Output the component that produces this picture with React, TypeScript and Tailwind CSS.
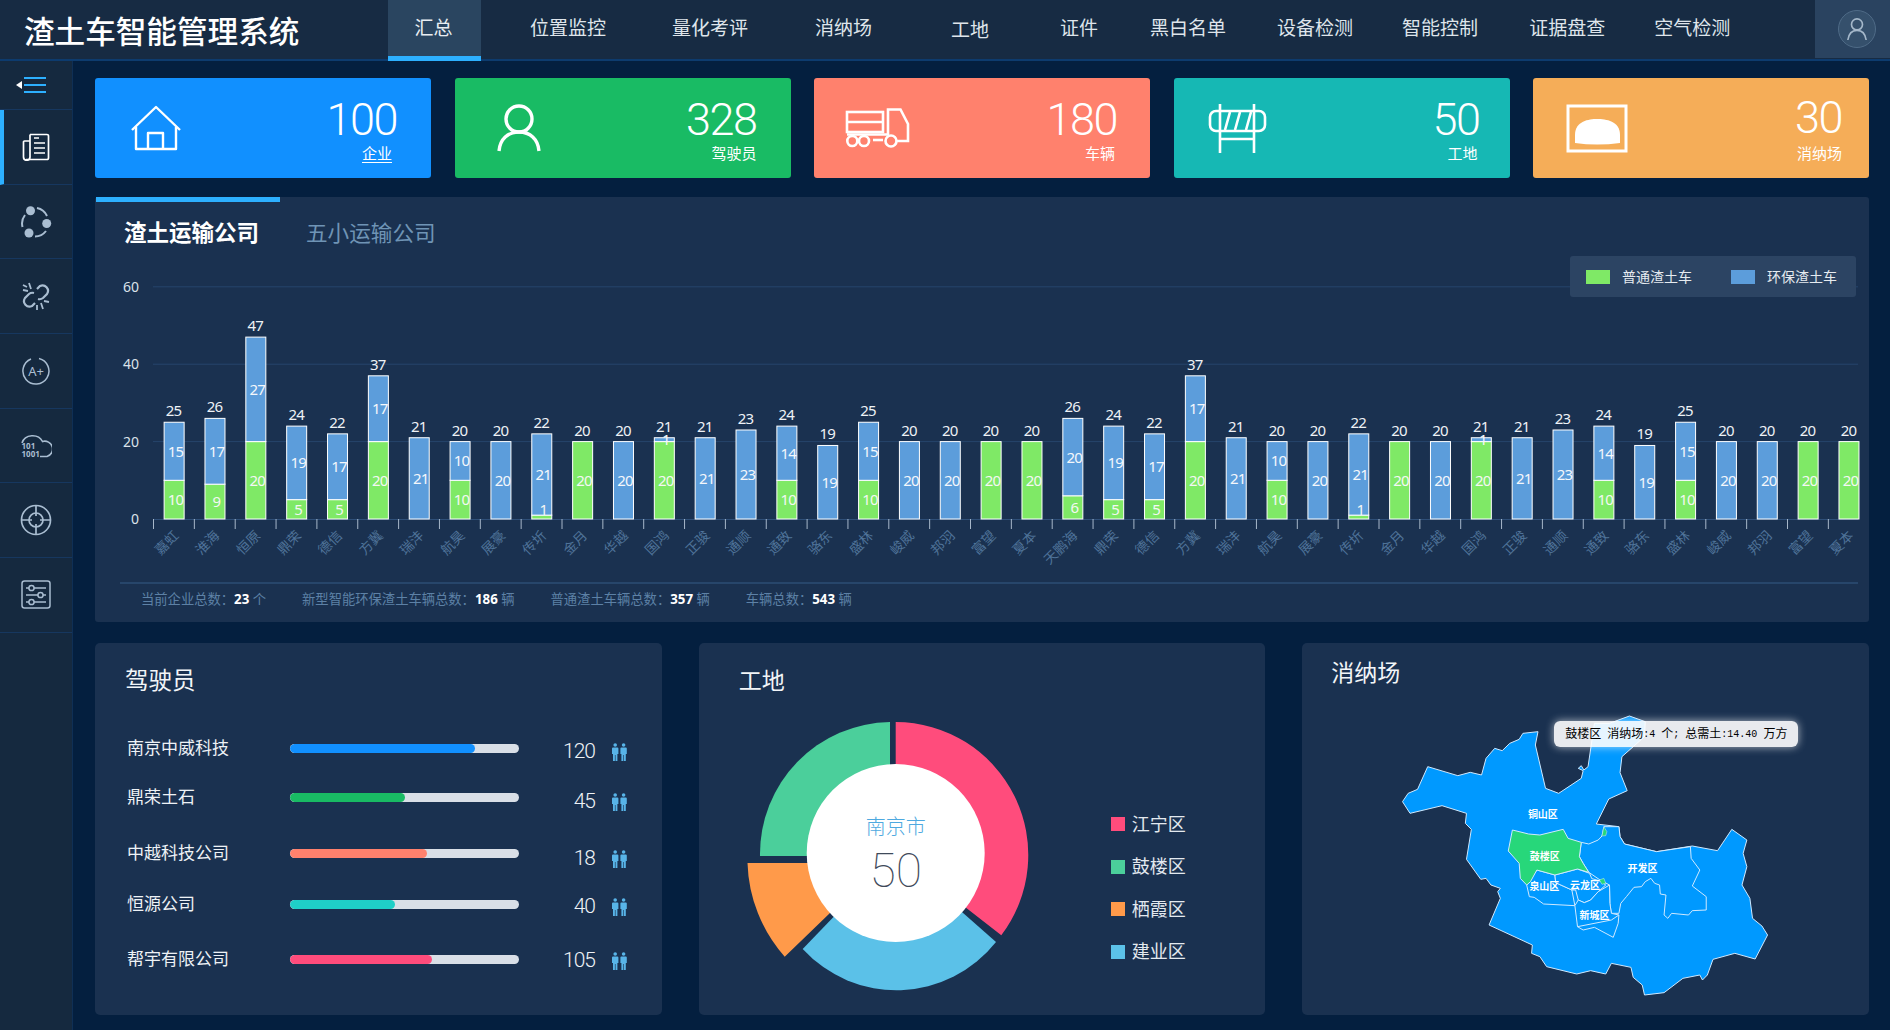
import React from "react";

const navItems = [
  { label: "位置监控", cls: "ml-[49px]" },
  { label: "量化考评", cls: "ml-[66px]" },
  { label: "消纳场", cls: "ml-[67px]" },
  { label: "工地", cls: "ml-[79px] translate-y-[2px]" },
  { label: "证件", cls: "ml-[71px]" },
  { label: "黑白名单", cls: "ml-[52px]" },
  { label: "设备检测", cls: "ml-[51px]" },
  { label: "智能控制", cls: "ml-[49px]" },
  { label: "证据盘查", cls: "ml-[51px]" },
  { label: "空气检测", cls: "ml-[49px]" },
];

const names = [
  "嘉虹", "淮海", "恒原", "鼎荣", "德信", "方冀", "瑞沣", "航昊", "展豪", "传圻", "金月", "华越", "国鸿", "正骏",
  "通顺", "通致", "骆东", "盛林", "峻威", "邦羽", "富望", "夏本", "天鹏海", "鼎荣", "德信", "方冀", "瑞沣", "航昊",
  "展豪", "传圻", "金月", "华越", "国鸿", "正骏", "通顺", "通致", "骆东", "盛林", "峻威", "邦羽", "富望", "夏本",
];
const green = [10, 9, 20, 5, 5, 20, 0, 10, 0, 1, 20, 0, 20, 0, 0, 10, 0, 10, 0, 0, 20, 20, 6, 5, 5, 20, 0, 10, 0, 1, 20, 0, 20, 0, 0, 10, 0, 10, 0, 0, 20, 20];
const blue = [15, 17, 27, 19, 17, 17, 21, 10, 20, 21, 0, 20, 1, 21, 23, 14, 19, 15, 20, 20, 0, 0, 20, 19, 17, 17, 21, 10, 20, 21, 0, 20, 1, 21, 23, 14, 19, 15, 20, 20, 0, 0];

const Y0 = 519;
const UNIT = 3.87;
const STEP = 40.85;

function BarChart() {
  return (
    <svg viewBox="95 257 1774 325" width={1774} height={325} className="block">
      {[20, 40, 60].map((v) => (
        <line key={v} x1={153} x2={1858} y1={Y0 - v * UNIT} y2={Y0 - v * UNIT} stroke="#26456c" strokeWidth={1} />
      ))}
      <line x1={153} x2={1858} y1={Y0 + 0.5} y2={Y0 + 0.5} stroke="#2f4f78" strokeWidth={1} />
      {[0, 20, 40, 60].map((v) => (
        <text key={v} x={139} y={Y0 - v * UNIT + 5} textAnchor="end" fontSize={14} fill="#dbe2ea">
          {v}
        </text>
      ))}
      {names.map((name, i) => {
        const tick = 153 + i * STEP;
        const cx = tick + STEP / 2 + 0.7;
        const g = green[i];
        const b = blue[i];
        const gTop = Y0 - g * UNIT;
        const bTop = gTop - b * UNIT;
        return (
          <g key={i}>
            <line x1={tick + 0.5} x2={tick + 0.5} y1={Y0} y2={Y0 + 10} stroke="#a7b7c9" strokeWidth={1} />
            <text
              x={tick + 23}
              y={538}
              textAnchor="end"
              fontSize={13.5}
              fill="#4f7399"
              transform={`rotate(-45 ${tick + 23} 533)`}
            >
              {name}
            </text>
            {g > 0 && <rect x={cx - 10} y={gTop} width={20} height={g * UNIT} fill="#7fe966" stroke="#fff" strokeWidth={1} />}
            {b > 0 && <rect x={cx - 10} y={bTop} width={20} height={b * UNIT} fill="#5c9ddb" stroke="#fff" strokeWidth={1} />}
            {g > 0 && (
              <text x={cx + 1.5} y={Math.min(Y0 - (g * UNIT) / 2, 509.5) + 5.5} textAnchor="middle" fontSize={15} letterSpacing={-0.8} fill="#f4f7f4">
                {g}
              </text>
            )}
            {b > 0 && (
              <text x={cx + 1.5} y={gTop - (b * UNIT) / 2 + 5.5} textAnchor="middle" fontSize={15} letterSpacing={-0.8} fill="#f4f7fb">
                {b}
              </text>
            )}
            <text x={cx - 0.5} y={bTop - 6} textAnchor="middle" fontSize={15} letterSpacing={-0.8} fill="#eef2f6">
              {g + b}
            </text>
          </g>
        );
      })}
    </svg>
  );
}

function HouseIcon() {
  return (
    <svg viewBox="0 0 50 46" width={50} height={46} fill="none" stroke="#fff" strokeWidth={2.4} strokeLinejoin="round">
      <path d="M1 25 L25 2 L49 25" />
      <path d="M5 22 V44 H45 V22" />
      <path d="M17 44 V28 H32 V44" />
    </svg>
  );
}

function PersonIcon() {
  return (
    <svg viewBox="0 0 44 48" width={44} height={48} fill="none" stroke="#fff" strokeWidth={3.4}>
      <ellipse cx={22} cy={15} rx={13} ry={13} />
      <path d="M2 47 C3 35 11 28 22 28 C33 28 41 35 42 47" />
    </svg>
  );
}

function TruckIcon() {
  return (
    <svg viewBox="845 108 66 42" width={66} height={42} fill="none" stroke="#fff" strokeWidth={2.6}>
      <rect x={847} y={113} width={36} height={20} />
      <path d="M847 123 H883" />
      <path d="M847 135.5 H888 V110.5 H900.5 L908 125 V142 H897" />
      <circle cx={852.3} cy={142} r={5} />
      <circle cx={864} cy={142} r={5} />
      <circle cx={891} cy={142} r={5.5} />
      <path d="M873 141 H883" />
    </svg>
  );
}

function BarrierIcon() {
  return (
    <svg viewBox="1208 103 60 51" width={60} height={51} fill="none" stroke="#fff" strokeWidth={2.6}>
      <rect x={1210} y={111} width={55} height={20} rx={6} />
      <path d="M1220 104 V153 M1254 104 V153 M1220 139 H1254" />
      <path d="M1230 112 L1225 130 M1240 112 L1235 130 M1251 112 L1246 130" />
    </svg>
  );
}

function TunnelIcon() {
  return (
    <svg viewBox="1566 104 62 50" width={62} height={50} fill="none" stroke="#fff" strokeWidth={3}>
      <rect x={1568} y={106} width={58} height={45} />
      <path d="M1575 143 V135 C1575 121 1589 119 1597 119 C1606 119 1620 121 1620 135 V143 Q1597 146 1575 143 Z" fill="#fff" stroke="none" />
    </svg>
  );
}

const cards = [
  { value: "100", label: "企业", bg: "bg-[#1190ff]", icon: <HouseIcon />, iconCls: "ml-[36px]", numCls: "mr-[34px]", labelCls: "mr-[39px] underline underline-offset-[3px] mt-[1px]" },
  { value: "328", label: "驾驶员", bg: "bg-[#19bb64]", icon: <PersonIcon />, iconCls: "ml-[42px]", numCls: "mr-[34px]", labelCls: "mr-[34px] mt-[1px]" },
  { value: "180", label: "车辆", bg: "bg-[#ff816d]", icon: <TruckIcon />, iconCls: "ml-[31px]", numCls: "mr-[33px]", labelCls: "mr-[35px] mt-[1px]" },
  { value: "50", label: "工地", bg: "bg-[#16b8b4]", icon: <BarrierIcon />, iconCls: "ml-[34px]", numCls: "mr-[30px]", labelCls: "mr-[32px] mt-[1px]" },
  { value: "30", label: "消纳场", bg: "bg-[#f5ad58]", icon: <TunnelIcon />, iconCls: "ml-[33px] translate-y-[1px]", numCls: "mr-[27px] -mt-[2px]", labelCls: "mr-[27px] mt-[3px]" },
];

function NavToggle() {
  return (
    <svg viewBox="0 0 32 18" width={32} height={18}>
      <path d="M0 9 L6 5 V13 Z" fill="#fff" />
      <path d="M8 2 H30 M8 9 H30 M8 16 H30" stroke="#2db0ff" strokeWidth={2} />
    </svg>
  );
}

function DocIcon() {
  return (
    <svg viewBox="0 0 28 28" width={28} height={28} fill="none" stroke="#fff" strokeWidth={1.7}>
      <path d="M8 1.5 H25 A1.5 1.5 0 0 1 26.5 3 V25 A1.5 1.5 0 0 1 25 26.5 H4" />
      <path d="M8 1.5 V24 A3.2 3.2 0 0 1 1.5 24 V9 A1 1 0 0 1 2.5 8 H8" />
      <path d="M12 5 H17 M12 10 H23 M12 15 H23 M12 20 H23" />
    </svg>
  );
}

function ShareIcon() {
  return (
    <svg viewBox="0 0 32 32" width={32} height={32} fill="none" stroke="#a9bdd1" strokeWidth={2}>
      <circle cx={10.5} cy={4.8} r={4.5} fill="#a9bdd1" stroke="none" />
      <circle cx={26.7} cy={17.5} r={4.5} fill="#a9bdd1" stroke="none" />
      <circle cx={9} cy={27} r={4.5} fill="#a9bdd1" stroke="none" />
      <path d="M5 9 A14 14 0 0 0 2.5 21" />
      <path d="M17 2 A14 14 0 0 1 27 10" />
      <path d="M15 30.5 A14 14 0 0 0 26 25" />
    </svg>
  );
}

function UnlinkIcon() {
  return (
    <svg viewBox="0 0 28 28" width={28} height={28} fill="none" stroke="#a9bdd1" strokeWidth={2.2}>
      <path d="M15 7 L18 4 A5.5 5.5 0 0 1 25 12 L21 16 A5.5 5.5 0 0 1 16 17" />
      <path d="M13 21 L10 24 A5.5 5.5 0 0 1 3 16 L7 12 A5.5 5.5 0 0 1 12 11" />
      <path d="M7 1 L9 7 M1 8 L6 9 M1 3 L5 5 M21 27 L19 21 M27 20 L22 19 M15 28 V23" strokeWidth={1.8} />
    </svg>
  );
}

function GradeIcon() {
  return (
    <svg viewBox="0 0 28 28" width={28} height={28} fill="none" stroke="#a9bdd1" strokeWidth={1.5}>
      <path d="M17 1.4 A13 13 0 1 1 9 2" />
      <text x={14} y={18.5} textAnchor="middle" fontSize={13} fill="#a9bdd1" stroke="none">
        A+
      </text>
    </svg>
  );
}

function CloudIcon() {
  return (
    <svg viewBox="0 0 31 25" width={31} height={25} fill="none" stroke="#a9bdd1" strokeWidth={1.6}>
      <path d="M1 10 A11 10 0 0 1 21.5 8.5 A7.5 7.5 0 0 1 26 23.5 H19" />
      <text x={0.5} y={16} fontSize={8} fontWeight={700} fill="#a9bdd1" stroke="none">
        101
      </text>
      <text x={0.5} y={24} fontSize={8} fontWeight={700} fill="#a9bdd1" stroke="none">
        1001
      </text>
    </svg>
  );
}

function TargetIcon() {
  return (
    <svg viewBox="0 0 32 32" width={32} height={32} fill="none" stroke="#a9bdd1" strokeWidth={1.7}>
      <circle cx={16} cy={16} r={14.5} />
      <circle cx={16} cy={16} r={7} />
      <path d="M16 1.5 V12 M16 20 V30.5 M1.5 16 H12 M20 16 H30.5" />
    </svg>
  );
}

function SlidersIcon() {
  return (
    <svg viewBox="0 0 30 29" width={30} height={29} fill="none" stroke="#a9bdd1" strokeWidth={1.5}>
      <rect x={1} y={1} width={28} height={27} rx={2.5} />
      <path d="M5 8 H8 M13 8 H25 M5 15 H17 M22 15 H25 M5 22 H8 M13 22 H25" />
      <circle cx={10.5} cy={8} r={2.6} />
      <circle cx={19.5} cy={15} r={2.6} />
      <circle cx={10.5} cy={22} r={2.6} />
    </svg>
  );
}

function PeopleIcon() {
  const fig = (
    <>
      <circle cx={3.2} cy={2} r={1.8} />
      <path d="M1 4.5 H5.4 A1 1 0 0 1 6.4 5.5 V11 H5.4 V18 H3.5 V12 H2.9 V18 H1 V11 H0 V5.5 A1 1 0 0 1 1 4.5 Z" />
    </>
  );
  return (
    <svg viewBox="0 0 15 18" width={15} height={18} fill="#58b4e8">
      {fig}
      <g transform="translate(8.4 0)">{fig}</g>
    </svg>
  );
}

const drivers = [
  { name: "南京中威科技", value: 120, fill: "bg-[#1190ff]", w: "w-[81%]", rowCls: "mt-[37px]", off: "translate-y-[4px]" },
  { name: "鼎荣土石", value: 45, fill: "bg-[#19bb64]", w: "w-[50%]", rowCls: "mt-[19px]", off: "translate-y-[5px]" },
  { name: "中越科技公司", value: 18, fill: "bg-[#ff816d]", w: "w-[60%]", rowCls: "mt-[26px]", off: "translate-y-[6px]" },
  { name: "恒源公司", value: 40, fill: "bg-[#1fcfc7]", w: "w-[46%]", rowCls: "mt-[21px]", off: "translate-y-[3px]" },
  { name: "帮宇有限公司", value: 105, fill: "bg-[#ff4c7c]", w: "w-[62%]", rowCls: "mt-[25px]", off: "translate-y-[2px]" },
];

function Donut() {
  return (
    <svg viewBox="745 715 300 285" width={300} height={285} className="shrink-0">
      <path d="M891 722 A132 132 0 0 0 761 856 L891 856 Z" fill="#4bcf9b" />
      <path d="M748.5 863 L880 863 L880 866 L829.7 914.3 L785.7 956.7 A148 148 0 0 1 748.5 863 Z" fill="#ff9a4a" />
      <path d="M997 942 A127 127 0 0 1 803.7 949 L896 853 Z" fill="#5bc1e8" />
      <path d="M896.7 722 A133 133 0 0 1 1002.3 935.3 L896.7 853 Z" fill="#ff4c7c" />
      <circle cx={896.7} cy={853} r={89} fill="#fff" />
      <text x={896.7} y={834} textAnchor="middle" fontSize={20} fill="#4ea9e0" fontWeight={300}>
        南京市
      </text>
      <text x={896.7} y={887} textAnchor="middle" fontSize={48} fill="#3f4a5a" fontWeight={100} fontFamily="Roboto, sans-serif">
        50
      </text>
    </svg>
  );
}

const siteLegend = [
  { label: "江宁区", color: "bg-[#ff4c7c]" },
  { label: "鼓楼区", color: "bg-[#4bcf9b]" },
  { label: "栖霞区", color: "bg-[#ff9a4a]" },
  { label: "建业区", color: "bg-[#5bc1e8]" },
];

// map outlines are read off the reference, in zoom-crop coordinates
const pts = (list: number[][]) => list.map(([x, y]) => `${x / 2.657 - 100},${y / 3 - 70}`).join(" ");

const outline = [
  [275, 485], [290, 460], [315, 448], [342, 380], [422, 407], [455, 397], [485, 405], [497, 355], [520, 325], [540, 332],
  [560, 310], [585, 298], [595, 280], [635, 275], [628, 315], [655, 445], [690, 460], [750, 415], [755, 392], [742, 385],
  [750, 377], [757, 390], [768, 380], [785, 250], [825, 250], [878, 228], [920, 245], [918, 290], [858, 350], [853, 398],
  [872, 452], [823, 477], [790, 552], [850, 560], [853, 590], [865, 612], [950, 635], [1045, 618], [1112, 632], [1150, 568],
  [1190, 600], [1180, 640], [1190, 680], [1177, 735], [1198, 775], [1205, 835], [1230, 858], [1245, 885], [1212, 957],
  [1158, 940], [1100, 958], [1085, 1005], [1072, 1020], [1065, 1005], [1020, 1015], [970, 1058], [918, 1065], [912, 1035],
  [888, 1012], [882, 982], [830, 970], [815, 1002], [775, 992], [738, 1002], [658, 980], [640, 950], [618, 940], [620, 915],
  [505, 855], [535, 775], [528, 755], [535, 745], [510, 735], [497, 715], [483, 718], [445, 658], [458, 568], [442, 550],
  [445, 520], [380, 497], [295, 520],
];
const gulou = [
  [567, 570], [610, 582], [640, 585], [702, 568], [715, 595], [750, 607], [745, 650], [755, 670], [770, 697], [740, 687],
  [680, 705], [632, 690], [615, 725], [605, 735], [588, 715], [585, 670], [556, 633],
];
const quanshan = [[605, 735], [632, 690], [680, 705], [682, 728], [725, 750], [733, 797], [650, 792], [625, 772], [612, 770]];
const yunlong = [
  [680, 705], [740, 687], [772, 700], [778, 716], [798, 722], [815, 735], [795, 755], [775, 780], [758, 788], [742, 780],
  [735, 750], [725, 750], [682, 728],
];
const xincheng = [
  [742, 780], [758, 788], [775, 780], [795, 755], [825, 735], [826, 790], [830, 820], [850, 825], [848, 850], [835, 892],
  [785, 862], [755, 870], [740, 860], [733, 797],
];
const kaifa = [
  [750, 607], [770, 612], [795, 600], [805, 588], [810, 560], [850, 560], [853, 590], [865, 612], [950, 635], [1040, 620],
  [1042, 655], [1065, 690], [1045, 738], [1082, 770], [1082, 810], [1045, 812], [1035, 825], [990, 820], [980, 835], [970, 825],
  [975, 765], [960, 762], [958, 735], [945, 730], [935, 715], [920, 725], [910, 740], [890, 742], [870, 770], [855, 790],
  [850, 820], [830, 820], [826, 790], [825, 735], [800, 720], [770, 697], [755, 670], [745, 650],
];
const mapLabels: [string, number, number][] = [
  ["铜山区", 648, 523],
  ["鼓楼区", 653, 650],
  ["开发区", 913, 685],
  ["泉山区", 652, 740],
  ["云龙区", 760, 737],
  ["新城区", 785, 827],
];

function CityMap() {
  return (
    <svg viewBox="0 0 400 290" width={400} height={290} className="ml-[97px] mt-[22px] block">
      <g stroke="#cfe9ff" strokeWidth={1} strokeLinejoin="round">
        <polygon points={pts(outline)} fill="#0099ff" />
        <polygon points={pts(kaifa)} fill="#0099ff" />
        <polygon points={pts(quanshan)} fill="#0099ff" />
        <polygon points={pts(yunlong)} fill="#0099ff" />
        <polygon points={pts(xincheng)} fill="#0099ff" />
        <polyline points={pts([[740, 860], [830, 840], [850, 825]])} fill="none" />
        <polygon points={pts(gulou)} fill="#27d77a" />
        <polygon points={pts([[805, 588], [810, 560], [818, 575], [815, 587]])} fill="#27d77a" strokeWidth={0.5} />
        <polygon points={pts([[798, 720], [810, 715], [815, 730], [805, 733]])} fill="#27d77a" strokeWidth={0.5} />
      </g>
      {mapLabels.map(([t, x, y]) => (
        <text key={t} x={x / 2.657 - 100} y={y / 3 - 70 + 3.5} textAnchor="middle" fontSize={10} fontWeight={700} fill="#fff">
          {t}
        </text>
      ))}
    </svg>
  );
}

const stats = [
  { label: "当前企业总数：", value: "23", unit: "个" },
  { label: "新型智能环保渣土车辆总数：", value: "186", unit: "辆" },
  { label: "普通渣土车辆总数：", value: "357", unit: "辆" },
  { label: "车辆总数：", value: "543", unit: "辆" },
];

function Half({ children }: { children: React.ReactNode }) {
  return <span className="text-[10px] font-['Liberation_Mono',monospace]">{children}</span>;
}

export default function App() {
  return (
    <div className="w-[1890px] h-[1030px] overflow-hidden flex flex-col bg-[#041f3f] text-white font-['Noto_Sans','Noto_Sans_CJK_SC',sans-serif]">
      <header className="h-[61px] shrink-0 flex bg-[#172b43] border-b-2 border-[#0d3b6e]">
        <div className="w-[388px] pl-[24px] flex items-center pt-[3px] text-[30.6px] font-medium leading-none">渣土车智能管理系统</div>
        <div className="w-[93px] h-[61px] flex items-center justify-center bg-[#2a4560] border-b-[5px] border-[#2db0ff] text-[19px] text-[#e8edf2] pr-[2px] pt-[1px]">
          汇总
        </div>
        {navItems.map((n) => (
          <div key={n.label} className={`h-[56px] flex items-center text-[19px] text-[#dfe5eb] ${n.cls}`}>
            {n.label}
          </div>
        ))}
        <div className="ml-auto w-[75px] h-[58px] bg-[#2a4360] flex items-center justify-center pl-[9px]">
          <div className="w-[38px] h-[38px] rounded-full border border-[#4f6b87] bg-[#35506c] flex items-center justify-center">
            <svg viewBox="0 0 24 28" width={22} height={26} fill="none" stroke="#a5b8ca" strokeWidth={1.8}>
              <circle cx={12} cy={9} r={6} />
              <path d="M2 26 C3 19 7 15.5 12 15.5 C17 15.5 21 19 22 26" />
            </svg>
          </div>
        </div>
      </header>

      <div className="flex-1 flex min-h-0">
        <aside className="w-[73px] shrink-0 bg-[#15293f] border-r border-[#0f2f55] flex flex-col">
          <div className="h-[49px] shrink-0 flex items-center justify-center border-b border-[#16375f] pr-[9px]">
            <NavToggle />
          </div>
          <div className="h-[74.7px] shrink-0 flex items-center justify-center border-b border-[#16375f] border-l-4 border-l-[#2db0ff] pr-[4px]">
            <DocIcon />
          </div>
          {[<ShareIcon />, <UnlinkIcon />, <GradeIcon />, <CloudIcon />, <TargetIcon />, <SlidersIcon />].map((icon, i) => (
            <div key={i} className="h-[74.7px] shrink-0 flex items-center justify-center border-b border-[#16375f]">
              {icon}
            </div>
          ))}
        </aside>

        <main className="flex-1 min-w-0 pt-[17px] pl-[22px] pr-[21px]">
          <div className="grid grid-cols-5 gap-[23.5px]">
            {cards.map((c) => (
              <div key={c.label} className={`h-[100px] rounded-[3px] flex items-center justify-between ${c.bg}`}>
                <div className={c.iconCls}>{c.icon}</div>
                <div className="h-full pt-[20px] flex flex-col items-end">
                  <div className={`text-[45px] leading-[44px] font-light tracking-[-1.5px] font-['Roboto',sans-serif] ${c.numCls}`}>{c.value}</div>
                  <div className={`text-[15px] leading-[20px] ${c.labelCls}`}>{c.label}</div>
                </div>
              </div>
            ))}
          </div>

          <section className="relative mt-[19px] h-[425px] rounded-[3px] bg-[#1a3150]">
            <div className="flex h-[60px]">
              <div className="w-[184px] ml-px h-[60px] border-t-[5px] border-[#2db0ff] pl-[28px] pt-[16px] text-[22.5px] leading-[30px] font-bold">渣土运输公司</div>
              <div className="ml-[26px] pt-[21px] text-[21.6px] leading-[30px] text-[#6f94b5]">五小运输公司</div>
            </div>
            <div className="absolute left-[1475px] top-[59px] w-[286px] h-[41px] rounded-[3px] bg-[#2c4463] flex items-center pl-[16px] text-[14px] text-[#e6ebf0]">
              <span className="w-[24px] h-[14px] bg-[#7fe966]" />
              <span className="ml-[12px]">普通渣土车</span>
              <span className="ml-[39px] w-[24px] h-[14px] bg-[#5c9ddb]" />
              <span className="ml-[12px]">环保渣土车</span>
            </div>
            <BarChart />
            <div className="ml-[25px] mr-[11px] h-[2px] bg-[#27466b]" />
            <div className="flex h-[32px] items-center pl-[46px] gap-[36px] text-[13.3px] text-[#5d81a6]">
              {stats.map((s) => (
                <span key={s.label}>
                  {s.label}
                  <b className="text-white font-bold">{s.value}</b> {s.unit}
                </span>
              ))}
            </div>
          </section>

          <div className="mt-[21px] grid grid-cols-3 gap-[37px]">
            <section className="h-[372px] rounded-[5px] bg-[#1a3150] pt-[21px]">
              <h3 className="pl-[30px] text-[23.5px] leading-[32px] font-normal text-[#f2f5f8]">驾驶员</h3>
              {drivers.map((d) => (
                <div key={d.name} className={`flex items-center h-[30px] pl-[32px] ${d.rowCls}`}>
                  <div className="w-[163px] text-[17px] text-[#eef2f6]">{d.name}</div>
                  <div className="w-[229px] h-[9px] rounded-full bg-[#d9dfe7] overflow-hidden">
                    <div className={`h-full rounded-full ${d.fill} ${d.w}`} />
                  </div>
                  <div className={`w-[76px] text-right text-[21px] tracking-[-1px] font-light text-[#eef2f6] font-['Roboto',sans-serif] ${d.off}`}>{d.value}</div>
                  <div className={`ml-[17px] ${d.off}`}>
                    <PeopleIcon />
                  </div>
                </div>
              ))}
            </section>

            <section className="h-[372px] rounded-[5px] bg-[#1a3150] pt-[21px]">
              <h3 className="pl-[40px] text-[23px] leading-[32px] font-normal text-[#f2f5f8]">工地</h3>
              <div className="flex mt-[19px] ml-[45px]">
                <Donut />
                <div className="ml-[67px] mt-[99px] flex flex-col gap-[22.5px]">
                  {siteLegend.map((l) => (
                    <div key={l.label} className="flex items-center h-[20px]">
                      <span className={`w-[14px] h-[14px] ${l.color}`} />
                      <span className="ml-[7px] text-[18px] text-[#e3e9ef]">{l.label}</span>
                    </div>
                  ))}
                </div>
              </div>
            </section>

            <section className="relative h-[372px] rounded-[5px] bg-[#1a3150] pt-[13px]">
              <h3 className="pl-[29px] text-[23px] leading-[32px] font-normal text-[#f2f5f8]">消纳场</h3>
              <CityMap />
              <div className="absolute left-[252px] top-[78px] w-[244px] h-[26px] rounded-[6px] bg-white/90 shadow-[0_0_8px_rgba(255,255,255,0.65)] flex items-center justify-center whitespace-pre text-[12px] text-black">
                鼓楼区<Half> </Half>消纳场<Half>:4 </Half>个<Half>; </Half>总需土<Half>:14.40 </Half>万方
              </div>
            </section>
          </div>
        </main>
      </div>
    </div>
  );
}
